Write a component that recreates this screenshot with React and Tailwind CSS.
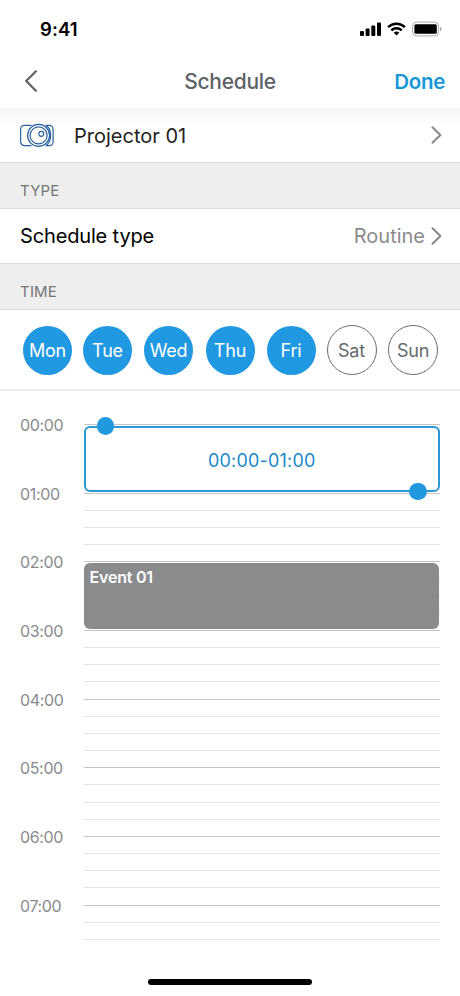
const days = [
  { name: 'Mon', active: true, space: 'ml-[23px]' },
  { name: 'Tue', active: true, space: 'ml-[11px]' },
  { name: 'Wed', active: true, space: 'ml-3' },
  { name: 'Thu', active: true, space: 'ml-[12.5px]' },
  { name: 'Fri', active: true, space: 'ml-3' },
  { name: 'Sat', active: false, space: 'ml-[11px]' },
  { name: 'Sun', active: false, space: 'ml-[11.5px]' },
];

const hours = [
  { label: '00:00', lines: 4 },
  { label: '01:00', lines: 4 },
  { label: '02:00', lines: 4 },
  { label: '03:00', lines: 4 },
  { label: '04:00', lines: 4 },
  { label: '05:00', lines: 4 },
  { label: '06:00', lines: 4 },
  { label: '07:00', lines: 3 },
];

const ChevronRight = () => (
  <svg className="w-[11px] h-[18px]" viewBox="0 0 11 18" fill="none" stroke="#8a8a8c" strokeWidth="2" strokeLinecap="round" strokeLinejoin="round">
    <path d="M1.5 1.2 9.4 9 1.5 16.8" />
  </svg>
);

const StatusBar = () => (
  <div className="h-[54px] flex items-center justify-between pl-10 pr-[18px] pt-1">
    <span className="text-[18.5px] leading-6 font-semibold tracking-[0.1px]">9:41</span>
    <div className="flex items-center">
      <svg className="w-[21px] h-[14px]" viewBox="0 0 21 14" fill="#000">
        <rect x="0" y="9" width="4" height="5" rx="1" />
        <rect x="5.6" y="6.4" width="4" height="7.6" rx="1" />
        <rect x="11.3" y="3.4" width="4" height="10.6" rx="1" />
        <rect x="17" y="0.4" width="4" height="13.6" rx="1" />
      </svg>
      <svg className="w-[19px] h-[14px] ml-1.5" viewBox="0 0 19 14" fill="none" stroke="#000" strokeWidth="2.5">
        <path d="M1.1 5.1a12 12 0 0 1 16.8 0" />
        <path d="M4.3 8.4a7.5 7.5 0 0 1 10.4 0" />
        <path d="M9.5 13.6 6.7 10.8a4 4 0 0 1 5.6 0z" fill="#000" stroke="none" />
      </svg>
      <svg className="w-[30px] h-[16px] ml-1.5" viewBox="0 0 30 16" fill="none">
        <rect x="0.6" y="1.1" width="26" height="13.8" rx="4" stroke="#a9a9a9" />
        <rect x="2.4" y="3.2" width="22.4" height="9.6" rx="1.5" fill="#000" />
        <path d="M28 5.7v4.8c1-.4 1.6-1.3 1.6-2.4S29 6.1 28 5.7z" fill="#a9a9a9" />
      </svg>
    </div>
  </div>
);

const ProjectorIcon = () => (
  <svg className="w-[34px] h-[26px]" viewBox="0 0 34 26" fill="none" stroke="#2a619f" strokeWidth="1.2">
    <path d="M11.5 3.3H4.4A3.8 3.8 0 0 0 .6 7.100v12.700a3.800 3.800 0 0 0 3.800 3.800h7.100" />
    <path d="M26.300 3.300h2.900a3.900 3.900 0 0 1 3.900 3.900v12.500a3.900 3.900 0 0 1-3.900 3.900h-2.900" />
    <path d="M25.500 3.200c3.300 1.500 5.100 5.700 5.100 10.200s-1.800 8.700-5.100 10.200" />
    <circle cx="18.600" cy="13.400" r="11" />
    <circle cx="18.600" cy="13.400" r="8.500" />
    <circle cx="21.300" cy="11.800" r="2.500" />
  </svg>
);

const SectionHeader = ({ title }) => (
  <div className="h-[47px] bg-[#eeeeee] border-y border-[#dcdcdc] pl-5 pt-[18px] text-[15px] leading-5 text-[#757577] tracking-[0.2px]">
    {title}
  </div>
);

const App = () => {
  return (
    <div className="w-[460px] h-[996px] flex flex-col bg-white text-black overflow-hidden font-['Inter',sans-serif]">
      <StatusBar />

      {/* Navigation */}
      <div className="h-[54px] grid grid-cols-[1fr_auto_1fr] items-center pl-6 pr-[15px]">
        <svg className="w-[14px] h-[22px]" viewBox="0 0 14 22" fill="none" stroke="#5d6266" strokeWidth="2.2" strokeLinecap="round" strokeLinejoin="round">
          <path d="M11.9 1.3 2.2 11l9.7 9.7" />
        </svg>
        <h1 className="pt-0.5 pr-[9px] text-center text-[21px] font-medium tracking-[-0.3px] text-[#5d6266]">Schedule</h1>
        <button className="pt-0.5 text-right text-[20.5px] font-semibold tracking-[-0.3px] text-[#1797d8]">Done</button>
      </div>

      {/* Device */}
      <div className="h-[54px] flex items-center pl-5 pr-[18px] bg-linear-to-b from-[#f5f5f5] to-white to-35%">
        <ProjectorIcon />
        <span className="ml-5 pt-px flex-1 text-[20px] text-[#222222]">Projector 01</span>
        <ChevronRight />
      </div>

      <SectionHeader title="TYPE" />
      <div className="h-[54px] flex items-center pl-5 pr-[18px]">
        <span className="flex-1 text-[20px] tracking-[-0.15px]">Schedule type</span>
        <span className="mr-1.5 text-[20px] text-[#8a8a8c]">Routine</span>
        <ChevronRight />
      </div>
      <SectionHeader title="TIME" />

      {/* Days */}
      <div className="h-[81px] flex items-center border-b-2 border-[#ededed] pt-px">
        {days.map((day) => (
          <div
            key={day.name}
            className={`${day.space} shrink-0 rounded-full flex items-center justify-center text-[18px] tracking-[-0.2px] ${
              day.active ? 'size-[49px] bg-[#2199e2] text-white' : 'size-[50px] border border-[#6b6d70] text-[#66696c]'
            }`}
          >
            {day.name}
          </div>
        ))}
      </div>

      {/* Timeline */}
      <div className="relative mt-[33px] pl-5 pr-5">
        {hours.map((hour) => (
          <div key={hour.label} className="h-[68.67px] flex">
            <span className="w-16 -mt-[9px] text-[16px] leading-5 tracking-[-0.35px] text-[#8a8a8c]">{hour.label}</span>
            <div className="flex-1">
              {Array.from({ length: hour.lines }, (_, i) => (
                <div key={i} className={`h-[17.167px] border-t ${i === 0 ? 'border-[#c4c4c4]' : 'border-[#e4e4e4]'}`} />
              ))}
            </div>
          </div>
        ))}

        {/* Selected slot with its drag handles */}
        <div className="absolute left-[83.5px] top-[2px] w-[356.5px] h-[66px] rounded-md border-2 border-[#2c97d2] bg-white flex items-center justify-center pt-0.5 text-[18px] tracking-[0.2px] text-[#2189c7]">
          00:00-01:00
          <span className="absolute left-[11px] -top-[11px] size-[17.5px] rounded-full bg-[#2199de]" />
          <span className="absolute right-[11.5px] -bottom-[10px] size-[17.5px] rounded-full bg-[#2199de]" />
        </div>

        <div className="absolute left-[83.5px] top-[139px] w-[355.5px] h-[66px] rounded-md bg-[#898b8c] px-1.5 pt-1 text-[16px] leading-5 font-semibold tracking-[-0.2px] text-white">
          Event 01
        </div>
      </div>

      {/* Home indicator */}
      <div className="mt-auto mb-[11px] mx-auto w-[164px] h-[6px] shrink-0 rounded-full bg-black" />
    </div>
  );
};

export default App;
